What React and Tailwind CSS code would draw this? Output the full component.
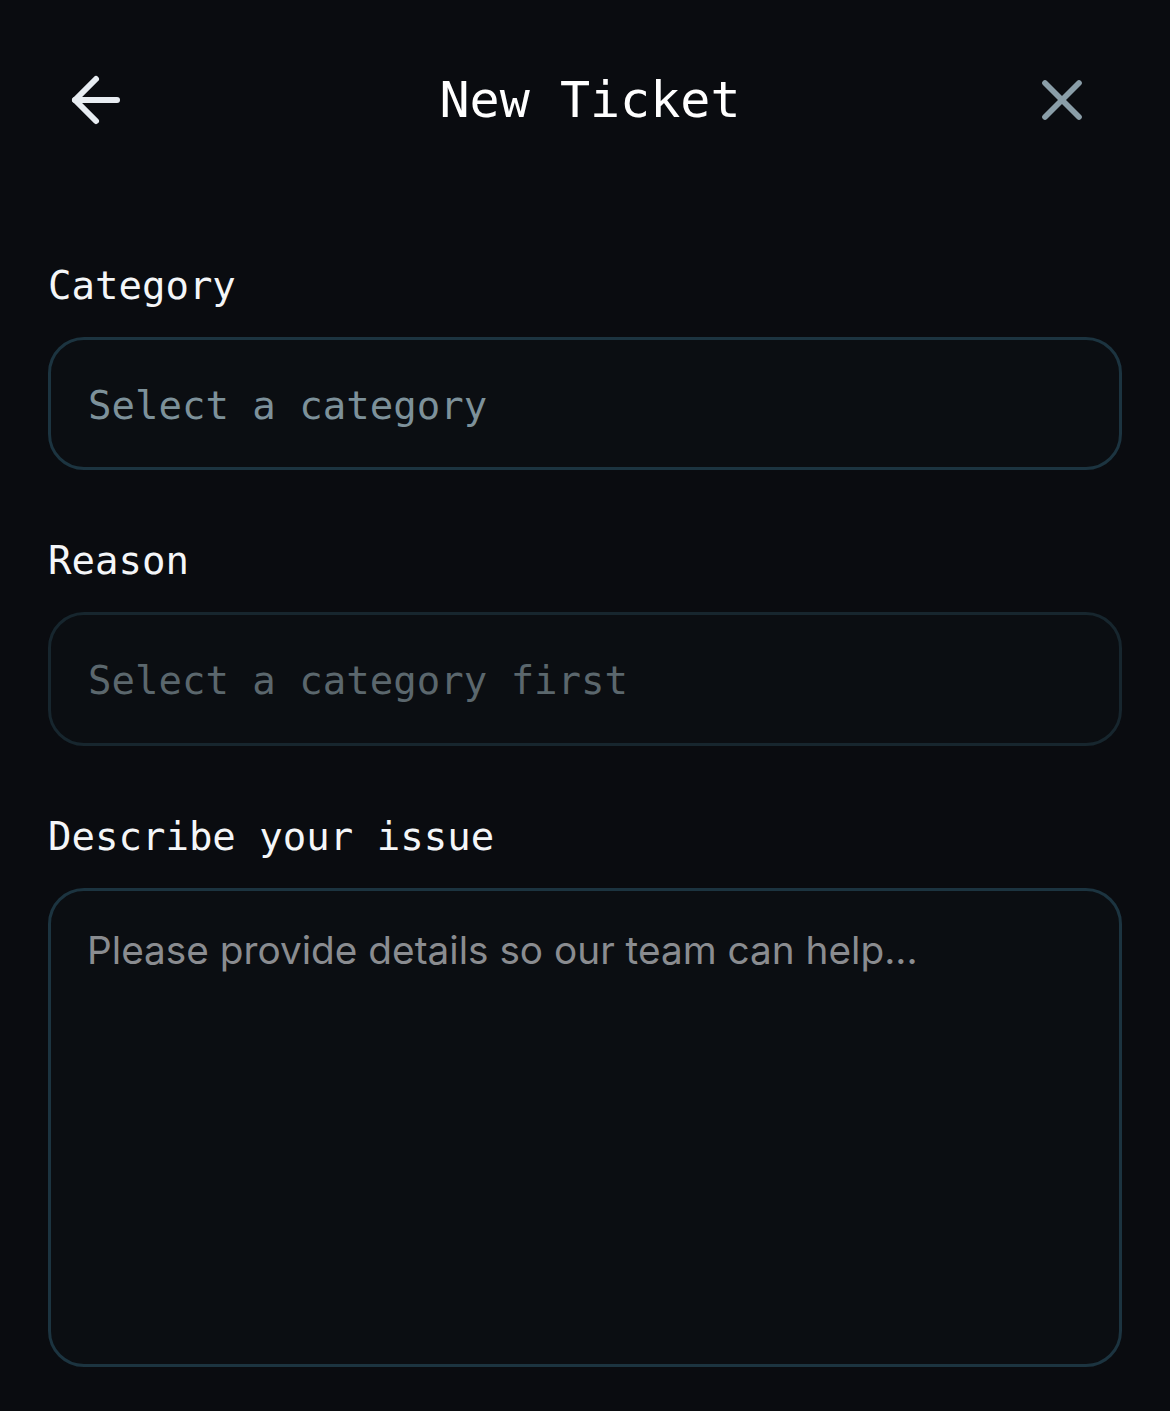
import { ArrowLeft, X } from "lucide-react";

const mono = "font-['DejaVu_Sans_Mono','Liberation_Mono',monospace]";

function Field({ label, children }) {
    return (
        <div className="flex flex-col">
            <label className={`${mono} text-[39px] leading-[58px] text-[#f4f6f8] mb-[22px]`}>{label}</label>
            {children}
        </div>
    );
}

export default function App() {
    return (
        <div className="w-[1170px] h-[1411px] bg-[#0a0c10] overflow-hidden">
            <div className="h-[200px] flex items-center pl-[60px] pr-[74px]">
                <button className="w-[72px] h-[72px] flex items-center justify-center text-[#e8edf2]">
                    <ArrowLeft size={72} strokeWidth={2} />
                </button>
                <h1 className={`${mono} flex-1 text-center pl-[20px] text-[50px] leading-[60px] text-white`}>New Ticket</h1>
                <button className="w-[68px] h-[68px] flex items-center justify-center text-[#8a9ea8]">
                    <X size={68} strokeWidth={2} />
                </button>
            </div>

            <div className="pt-[57px] pl-[48px] pr-[48px] flex flex-col gap-[62px]">
                <Field label="Category">
                    <div className="h-[133px] rounded-[36px] border-[3px] border-[#1c3440] bg-[#0b0e12] flex items-center pl-[37px] pt-[5px]">
                        <span className={`${mono} text-[39px] text-[#7d919a]`}>Select a category</span>
                    </div>
                </Field>
                <Field label="Reason">
                    <div className="h-[134px] rounded-[36px] border-[3px] border-[#17262e] bg-[#0b0e12] flex items-center pl-[37px] pt-[5px]">
                        <span className={`${mono} text-[39px] text-[#5b676d]`}>Select a category first</span>
                    </div>
                </Field>
                <Field label="Describe your issue">
                    <textarea
                        placeholder="Please provide details so our team can help..."
                        className="h-[479px] resize-none rounded-[36px] border-[3px] border-[#1c3440] bg-[#0b0e12] pl-[36px] pr-[36px] pt-[30px] font-['Inter',sans-serif] text-[38.75px] leading-[58px] text-white placeholder:text-[#8a8c90] outline-none"
                    />
                </Field>
            </div>
        </div>
    );
}
